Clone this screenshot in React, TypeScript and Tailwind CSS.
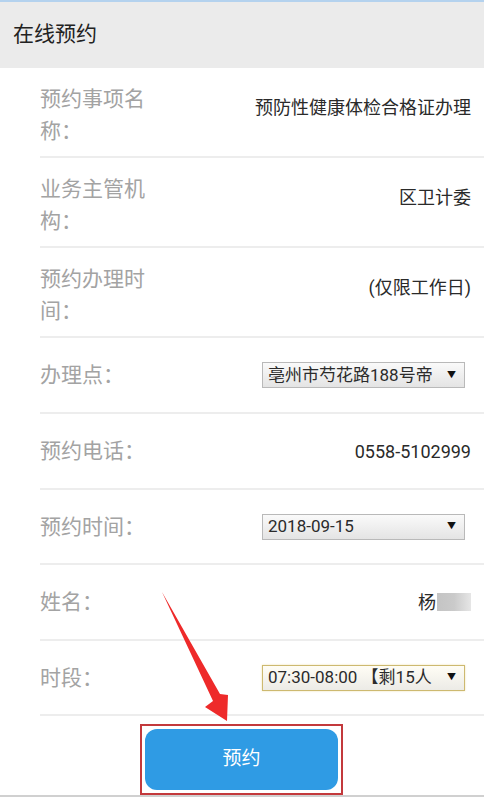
import React from "react";

const font = { fontFamily: 'Roboto, "Noto Sans CJK SC", "Noto Sans", sans-serif' };

function Row({ h, label, multi, children }: { h: string; label: string; multi?: boolean; children?: React.ReactNode }) {
  return (
    <div className={`flex items-center justify-between border-b-2 border-[#ededed] pr-[13px] ${h}`}>
      <div className={`w-[110px] text-[21px] leading-[32px] text-[#a3a3a3] ${multi ? "mt-[6px]" : ""}`}>{label}</div>
      <div className="flex items-center">{children}</div>
    </div>
  );
}

function Select({ text, gold }: { text: string; gold?: boolean }) {
  return (
    <div
      className={`mr-[6px] flex h-[26px] w-[203px] items-center justify-between border ${
        gold
          ? "border-[#cdb970] bg-gradient-to-b from-[#fffdf5] to-[#ecebe6] shadow-[0_0_2px_#efe3b0]"
          : "border-[#b9b9b9] bg-gradient-to-b from-[#fafafa] to-[#e4e4e4]"
      } pl-[5px] pr-[8px]`}
    >
      <span className="text-[17px] leading-none text-[#2b2b2b] whitespace-nowrap">{text}</span>
      <span className="text-[9px] leading-none text-[#111]">▼</span>
    </div>
  );
}

export default function App() {
  return (
    <div className="relative h-[797px] w-[484px] overflow-hidden bg-white" style={font}>
      <div className="h-[2px] bg-[#b4d2ee]" />
      <div className="flex h-[66px] items-center bg-[#ebebeb] pl-[13px] text-[21px] text-[#222]">在线预约</div>
      <div className="ml-[40px]">
        <Row h="h-[90px]" label="预约事项名称：" multi>
          <span className="mb-[10px] text-[18px] text-[#2a2a2a]">预防性健康体检合格证办理</span>
        </Row>
        <Row h="h-[90px]" label="业务主管机构：" multi>
          <span className="mb-[10px] text-[18px] text-[#2a2a2a]">区卫计委</span>
        </Row>
        <Row h="h-[90px]" label="预约办理时间：" multi>
          <span className="mb-[10px] text-[18px] text-[#2a2a2a]">(仅限工作日)</span>
        </Row>
        <Row h="h-[76px]" label="办理点：">
          <Select text="亳州市芍花路188号帝" />
        </Row>
        <Row h="h-[76px]" label="预约电话：">
          <span className="text-[18px] text-[#2a2a2a]">0558-5102999</span>
        </Row>
        <Row h="h-[75px]" label="预约时间：">
          <Select text="2018-09-15" />
        </Row>
        <Row h="h-[76px]" label="姓名：">
          <span className="flex items-center text-[18px] text-[#2a2a2a]">
            杨<span className="ml-[1px] h-[18px] w-[34px] bg-gradient-to-r from-[#c4c4c4] via-[#cacaca] to-[#e6e6e6]" />
          </span>
        </Row>
        <Row h="h-[75px]" label="时段：">
          <Select text="07:30-08:00 【剩15人" gold />
        </Row>
        <div className="pl-[100px] pt-[8px]">
          <div className="h-[71px] w-[203px] border-2 border-[#c3393c] p-[3px]">
            <div className="flex h-full w-full items-center justify-center rounded-[12px] bg-[#2f9be4] text-[19px] text-white">
              预约
            </div>
          </div>
        </div>
      </div>
      <div className="absolute bottom-0 left-0 h-[2px] w-full bg-[#d0d0d0]" />
      <svg className="pointer-events-none absolute left-0 top-0" width="484" height="797">
        <polygon points="162,592 220,694 228,695 227,721 205,707 213,701" fill="#ee2a2a" />
      </svg>
    </div>
  );
}
